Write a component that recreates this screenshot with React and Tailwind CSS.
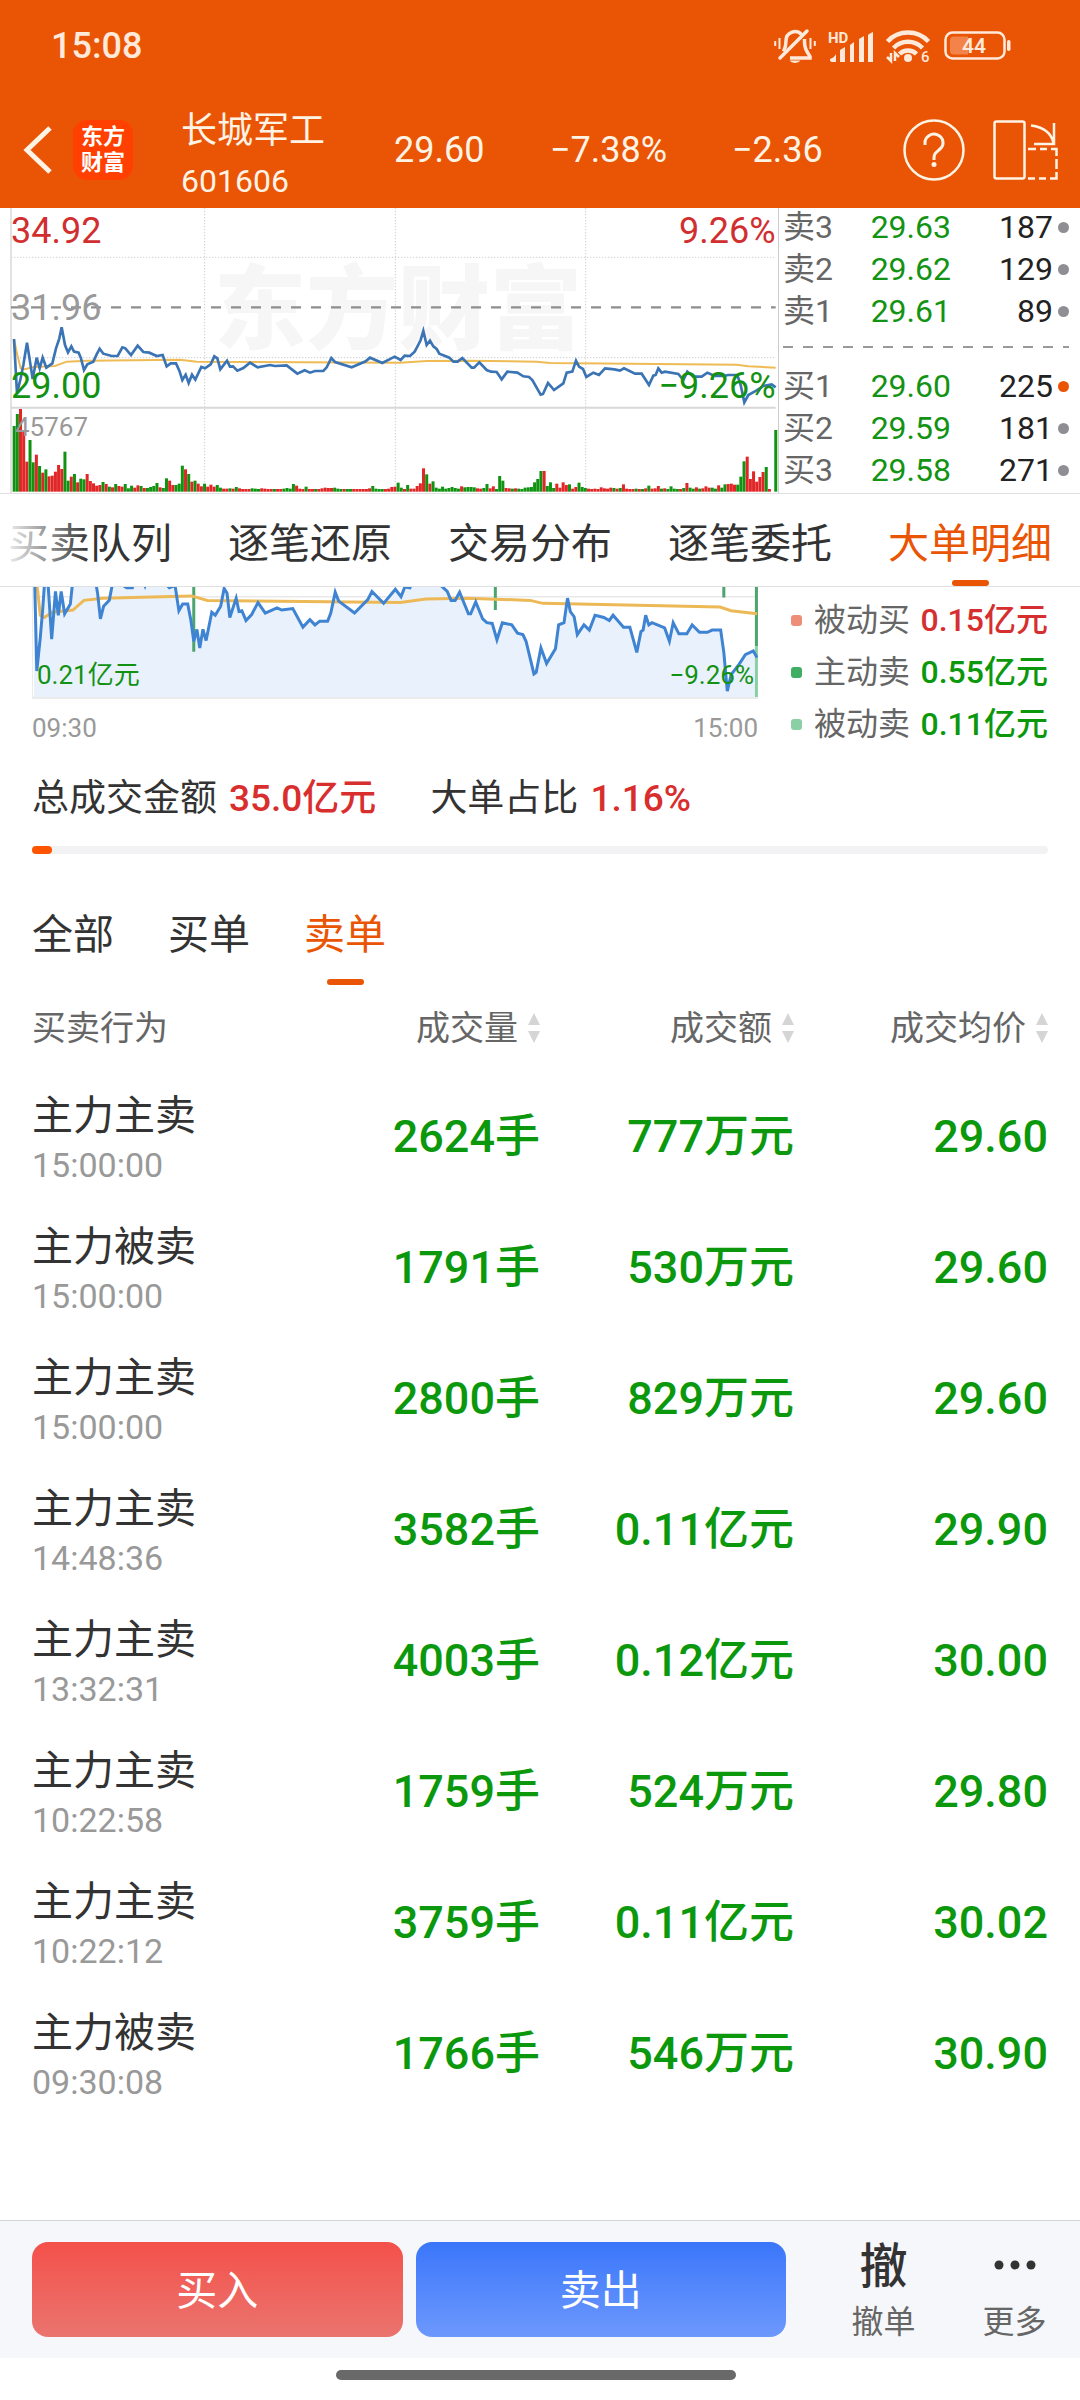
import { useState } from 'react';

const asks = [
  { label: '卖3', price: '29.63', qty: 187 },
  { label: '卖2', price: '29.62', qty: 129 },
  { label: '卖1', price: '29.61', qty: 89 },
];

const bids = [
  { label: '买1', price: '29.60', qty: 225, active: true },
  { label: '买2', price: '29.59', qty: 181 },
  { label: '买3', price: '29.58', qty: 271 },
];

const navTabs = ['买卖队列', '逐笔还原', '交易分布', '逐笔委托', '大单明细'];

const legend = [
  { label: '被动买', value: '0.15亿元', dot: 'bg-[#ed8f78]', text: 'text-[#d62f2f]' },
  { label: '主动卖', value: '0.55亿元', dot: 'bg-[#3fae64]', text: 'text-[#0c980c]' },
  { label: '被动卖', value: '0.11亿元', dot: 'bg-[#8bd0a4]', text: 'text-[#0c980c]' },
];

const orders = [
  { type: '主力主卖', time: '15:00:00', volume: '2624手', amount: '777万元', price: '29.60' },
  { type: '主力被卖', time: '15:00:00', volume: '1791手', amount: '530万元', price: '29.60' },
  { type: '主力主卖', time: '15:00:00', volume: '2800手', amount: '829万元', price: '29.60' },
  { type: '主力主卖', time: '14:48:36', volume: '3582手', amount: '0.11亿元', price: '29.90' },
  { type: '主力主卖', time: '13:32:31', volume: '4003手', amount: '0.12亿元', price: '30.00' },
  { type: '主力主卖', time: '10:22:58', volume: '1759手', amount: '524万元', price: '29.80' },
  { type: '主力主卖', time: '10:22:12', volume: '3759手', amount: '0.11亿元', price: '30.02' },
  { type: '主力被卖', time: '09:30:08', volume: '1766手', amount: '546万元', price: '30.90' },
];

// Intraday price line, shared by both charts
const pricePoints =
  '42,402 51,565 62,520 70,480 81,413 90,470 98,522 110,458 119,490 128,458 139,488 157,475 168,430 178,400 185,367 195,420 204,442 214,424 222,440 236,443 243,460 252,495 262,478 280,470 290,448 299,431 310,446 335,453 353,453 367,427 376,430 393,450 413,422 430,441 448,443 470,453 488,450 500,484 512,475 528,475 538,497 547,525 557,509 566,534 576,509 586,524 604,486 615,490 632,478 643,454 652,460 661,493 681,467 690,485 699,484 712,497 730,489 750,473 773,487 810,480 825,483 860,481 892,506 914,496 930,503 945,498 970,498 980,487 994,459 1005,471 1055,487 1097,469 1110,458 1147,474 1184,455 1202,465 1214,452 1230,453 1244,440 1254,421 1262,405 1270,378 1280,420 1290,407 1300,424 1310,432 1318,446 1348,458 1360,470 1373,470 1387,459 1415,488 1422,488 1438,472 1460,495 1473,500 1490,501 1505,523 1522,500 1552,503 1570,514 1587,516 1597,525 1622,569 1629,567 1644,534 1662,555 1690,535 1700,503 1717,500 1728,467 1737,485 1749,492 1759,516 1780,503 1797,510 1815,490 1843,493 1860,497 1872,490 1905,506 1925,506 1947,540 1960,512 1967,510 1975,490 1985,503 1995,500 2035,507 2050,525 2062,500 2080,515 2105,515 2122,503 2145,513 2170,513 2185,510 2212,510 2222,540 2233,592 2245,570 2270,556 2290,543 2315,538 2327,547';

const averagePoints =
  '42,402 52,450 62,490 75,493 100,486 165,483 200,470 260,467 540,464 590,470 1200,473 1280,468 1410,467 1610,470 1650,474 2210,479 2245,484 2327,488';

// Volume per minute; negative means the price fell
const volumes = [
  -197, -233, 248, 185, 90, -155, -88, 111, -77, 57, -67, 46, 48, 60, 80, 68, -120, -33, 45, -53,
  28, -39, -37, 53, 32, 25, 18, 20, -29, 23, -15, 13, -23, 17, 15, -23, -10, -18, 12, 19,
  -17, 11, -11, -14, -17, -26, 13, -11, -40, 33, 20, -20, -24, -78, 67, -53, 30, -33, 24, 16,
  -24, 15, 21, 15, -20, -12, 9, 9, -10, 9, -14, 10, 8, 8, 8, -10, -9, -8, 10, 9,
  8, 8, -8, 8, 8, -9, -11, -9, -23, 18, 9, 8, -15, 8, 8, -8, 8, 10, 12, 11,
  11, -12, -9, -8, 8, -8, -8, 8, 8, 8, 8, 8, 10, -17, -9, -8, -8, 8, 9, 14,
  15, -27, -12, 8, -20, 9, 9, 17, 25, 70, -52, 24, -31, -12, -9, -15, -9, -11, -14, -11,
  -9, 16, -13, -14, -14, -13, 10, 9, -11, -23, 10, 16, -8, -47, -33, 11, 10, -9, 10, -9,
  -8, -12, -13, -14, -28, -38, -62, 62, -17, -28, -11, 24, 12, 28, 20, -22, 9, 14, -27, -14,
  -11, 9, 8, 9, 8, 13, 10, 9, 12, -11, 9, -11, 22, 9, 8, 8, -9, 8, -8, 10,
  -18, 9, 10, 17, -9, 10, -8, -16, -9, -8, 8, -11, 26, -12, -9, 13, -9, 10, 16, 12,
  -12, -9, 19, -12, -22, 23, 24, 21, -21, -45, -91, 105, 38, 61, 30, 44, 59, -74, 8, 0,
  -185,
];

const StatusIcons = () => (
  <div className="flex items-center gap-3 text-[#ffe9da]">
    <svg width="42" height="36" viewBox="0 0 42 36" fill="none" stroke="currentColor" strokeWidth="3.5">
      <path d="M9.5 23.5C11.5 20 12 17 12 13a9 9 0 0 1 15.5-6.5" />
      <path d="M30.5 11v3c0 6 2 9 5.5 14.5V30H16" />
      <path d="M33 3 6 30" strokeLinecap="round" />
      <path d="M15.500 32.500h11a6 4 0 0 1-11 0Z" fill="currentColor" stroke="none" />
      <path d="M1.200 13v5M5.500 10v11M36.500 10v11M40.800 13v5" strokeWidth="2" />
    </svg>
    <svg width="46" height="34" viewBox="0 0 46 34" fill="currentColor" className="overflow-visible">
      <text x="0" y="14" fontSize="15" fontWeight="700">HD</text>
      <path d="M2 30q4-1 6-5v8H4q-2 0-2-2zM12 21l5-3v15h-5zM22 16l4-3v20h-4zM31 10l5-3v26h-5zM40 6q2-2 5-3v30h-5z" />
    </svg>
    <svg width="46" height="36" viewBox="0 0 46 36" fill="none" stroke="currentColor" strokeWidth="4.5" className="overflow-visible">
      <path d="M1.500 13.500a28 28 0 0 1 41 0" />
      <path d="M7.500 20a20 20 0 0 1 29 0" />
      <path d="M13.500 26a12 12 0 0 1 17 0" />
      <circle cx="22" cy="30" r="4" fill="currentColor" stroke="none" />
      <path d="M1 29l4 4v-8M9 33v-8l4 4" strokeWidth="2.500" />
      <text x="35" y="34" fontSize="15" fontWeight="500" fill="currentColor" stroke="none">6</text>
    </svg>
    <svg width="67" height="30" viewBox="0 0 67 30">
      <rect x="1.500" y="1.500" width="59" height="26" rx="7" fill="none" stroke="currentColor" strokeWidth="2.500" />
      <path d="M10 5.500h14v18H10q-4 0-4-4v-10q0-4 4-4z" fill="#f4834a" />
      <rect x="63" y="9" width="3.500" height="11" rx="1.700" fill="currentColor" />
      <text x="30" y="22" fontSize="21" fontWeight="600" textAnchor="middle" fill="currentColor">44</text>
    </svg>
  </div>
);

const Header = () => (
  <header className="bg-[#e95504] text-[#fff3e6]">
    <div className="flex h-24 items-center justify-between pb-1 pl-[51px] pr-[69px]">
      <span className="text-[36px] font-medium text-[#ffe9da]">15:08</span>
      <StatusIcons />
    </div>
    <div className="flex h-28 items-center pb-1 pl-[23px] pr-[21px]">
      <button type="button" aria-label="返回">
        <svg width="30" height="50" viewBox="0 0 30 50" fill="none" stroke="currentColor" strokeWidth="5">
          <path d="M27 3 4 25l23 22" />
        </svg>
      </button>
      <div className="ml-5 flex h-15 w-15 flex-col items-center justify-center rounded-[14px] bg-[#ff4000] text-[22px] font-bold leading-[26px] text-white">
        <span>东方</span>
        <span>财富</span>
      </div>
      <div className="ml-12 w-[213px] pt-3 leading-[50px]">
        <h1 className="text-[36px]">长城军工</h1>
        <p className="text-[32px]">601606</p>
      </div>
      <span className="w-[156px] text-[36px]">29.60</span>
      <span className="w-[182px] text-[36px]">−7.38%</span>
      <span className="text-[36px]">−2.36</span>
      <div className="ml-auto flex gap-7">
        <button type="button" aria-label="帮助">
          <svg width="62" height="62" viewBox="0 0 62 62" fill="none" stroke="currentColor">
            <circle cx="31" cy="31" r="29.500" strokeWidth="2.500" />
            <path d="M22 26v-2a9 8.500 0 1 1 15 6c-4 3.500-6 4.500-6 9v2" strokeWidth="3" />
            <circle cx="31" cy="45.500" r="2.500" fill="currentColor" stroke="none" />
          </svg>
        </button>
        <button type="button" aria-label="横屏">
          <svg width="66" height="60" viewBox="0 0 66 60" fill="none" stroke="currentColor" strokeWidth="2.500">
            <rect x="1.500" y="1.500" width="30" height="57" rx="2" />
            <path d="M38 5.500C50 7 58 12 60.500 23M61 3v21H41" />
            <path d="M35 29h8m4 0h7m4 0h5.500v7m0 3v10m0 3v6.500H57m-4 0h-7m-4 0h-7" />
          </svg>
        </button>
      </div>
    </div>
  </header>
);

const IntradayChart = () => (
  <svg viewBox="0 9 2334 855" className="block h-auto w-full" role="img" aria-label="分时图">
    <text x="642" y="410" fontSize="276" fontWeight="900" fill="#f6f6f6">东方财富</text>
    <g stroke="#cfcfcf" strokeWidth="3" strokeDasharray="4 5" fill="none">
      <path d="M33 157H2327M33 458H2327M614 9V860M1186 9V860M1757 9V860" />
    </g>
    <path d="M33 9V864" stroke="#dddddd" strokeWidth="5" />
    <path d="M33 608H2327" stroke="#d8d8d8" strokeWidth="6" />
    <path d="M33 307H2327" stroke="#8e8e8e" strokeWidth="7" strokeDasharray="30 30" />
    {volumes.map((v, i) => (
      <rect
        key={i}
        x={38 + i * 9.52}
        y={860 - Math.abs(v)}
        width="9"
        height={Math.abs(v)}
        fill={v > 0 ? '#e02626' : '#109310'}
      />
    ))}
    <polyline points={averagePoints} fill="none" stroke="#efbb55" strokeWidth="6" />
    <polyline points={pricePoints} fill="none" stroke="#3a74b4" strokeWidth="8" />
    <g fontSize="108">
      <text x="33" y="115" fill="#d12f2f">34.92</text>
      <text x="33" y="346" fill="#999999">31.96</text>
      <text x="33" y="579" fill="#139113">29.00</text>
      <text x="2327" y="115" fill="#d12f2f" textAnchor="end">9.26%</text>
      <text x="2327" y="579" fill="#139113" textAnchor="end">−9.26%</text>
      <text x="45" y="693" fill="#999999" fontSize="78">45767</text>
    </g>
  </svg>
);

const BookRow = ({ label, price, qty, active }) => (
  <li className="flex h-[38px] items-center">
    <span className="w-[60px] text-[#666]">{label}</span>
    <span className="w-[108px] text-right text-[#139313]">{price}</span>
    <span className="flex-1 text-right text-[#222]">{qty}</span>
    <span className={`ml-[5px] h-[11px] w-[11px] rounded-full ${active ? 'bg-[#e95504]' : 'bg-[#8f8e94]'}`} />
  </li>
);

const OrderBook = () => (
  <div className="border-l border-[#ccc] pl-1 pr-[11px] text-[32px] leading-[38px]">
    <ul className="flex flex-col gap-1">
      {asks.map((row) => <BookRow key={row.label} {...row} />)}
    </ul>
    <svg className="my-[15px] block h-[7px] w-full" aria-hidden="true">
      <path d="M0 2H400" stroke="#999" strokeWidth="2" strokeDasharray="10 10" />
    </svg>
    <ul className="flex flex-col gap-1">
      {bids.map((row) => <BookRow key={row.label} {...row} />)}
    </ul>
  </div>
);

const BigOrderChart = () => (
  <div>
    <div className="relative border-b-2 border-l border-[#ebebeb] text-[26px] leading-8 text-[#139113]">
      {/* same series as the intraday chart, only its lower band is visible */}
      <svg viewBox="39 452 2291 148" preserveAspectRatio="none" className="block h-[110px] w-full" role="img" aria-label="大单走势">
        <path d="M39 465H2330" stroke="#e9e9ec" strokeWidth="2" />
        <polygon points={`42,600 ${pricePoints} 2327,600`} fill="#e9f2fc" />
        <g fill="none" strokeWidth="3">
          <path d="M547 452V539M1500 452V483M2222 452V466M2325 452V532" stroke="#4ba56c" vectorEffect="non-scaling-stroke" />
          <path d="M2325 532V600" stroke="#8bd0a4" vectorEffect="non-scaling-stroke" />
          <polyline points={averagePoints} stroke="#ecb956" vectorEffect="non-scaling-stroke" />
          <polyline points={pricePoints} stroke="#3f83d3" vectorEffect="non-scaling-stroke" />
        </g>
      </svg>
      <span className="absolute bottom-1.5 left-1">0.21亿元</span>
      <span className="absolute bottom-1.5 right-1">−9.26%</span>
    </div>
    <div className="mt-[13px] flex justify-between text-[26px] leading-8 text-[#999]">
      <span>09:30</span>
      <span>15:00</span>
    </div>
  </div>
);

const SortIcon = () => (
  <svg width="12" height="30" viewBox="0 0 12 30" fill="#d5d5d5">
    <path d="M6 0l6 12H0zM6 30l6-12H0z" />
  </svg>
);

const SortHeader = ({ label }) => (
  <th className="p-0 font-normal">
    <button type="button" className="ml-auto flex items-center gap-2.5">
      {label}
      <SortIcon />
    </button>
  </th>
);

const App = () => {
  const [tab, setTab] = useState('大单明细');
  const [side, setSide] = useState('卖单');

  return (
    <div className="flex min-h-screen flex-col bg-white font-[Roboto,'Noto_Sans_CJK_SC',sans-serif] text-[#333]">
      <Header />

      <section className="grid grid-cols-[778fr_302fr] border-b border-[#e0e0e0]">
        <IntradayChart />
        <OrderBook />
      </section>

      <nav className="relative flex h-[93px] items-stretch gap-[56px] overflow-hidden border-b border-[#e0e0e0] pl-2">
        {navTabs.map((name) => (
          <button
            key={name}
            type="button"
            onClick={() => setTab(name)}
            className={`flex shrink-0 flex-col items-center justify-end text-[41px] leading-[56px] ${tab === name ? 'text-[#e95504]' : 'text-[#333]'}`}
          >
            {name}
            <span className={`mt-2 h-[6px] w-[37px] rounded-full ${tab === name ? 'bg-[#e95504]' : 'bg-transparent'}`} />
          </button>
        ))}
        <div className="pointer-events-none absolute inset-y-0 left-0 w-[90px] bg-gradient-to-r from-white to-transparent" />
      </nav>

      <main className="flex-1 px-8">
        <section className="grid grid-cols-[726fr_257fr] gap-[33px]">
          <BigOrderChart />
          <ul className="pt-[7px]">
            {legend.map((item) => (
              <li key={item.label} className="flex h-[52px] items-center text-[32px]">
                <span className={`h-[11px] w-[11px] rounded-[3px] ${item.dot}`} />
                <span className="ml-3 text-[#666]">{item.label}</span>
                <span className={`ml-auto font-medium ${item.text}`}>{item.value}</span>
              </li>
            ))}
          </ul>
        </section>

        <div className="mt-[25px] flex gap-[54px] text-[37px] leading-[48px]">
          <p>总成交金额<span className="ml-3 font-medium text-[#d92e2e]">35.0亿元</span></p>
          <p>大单占比<span className="ml-3 font-medium text-[#d92e2e]">1.16%</span></p>
        </div>
        <div className="mt-[23px] h-2 rounded-full bg-[#f2f2f5]">
          <div className="h-2 w-5 rounded-full bg-[#ff5400]" />
        </div>

        <div className="mt-[53px] flex gap-[54px]">
          {['全部', '买单', '卖单'].map((name) => (
            <button
              key={name}
              type="button"
              onClick={() => setSide(name)}
              className={`flex flex-col items-center text-[41px] leading-[56px] ${side === name ? 'text-[#e95504]' : 'text-[#333]'}`}
            >
              {name}
              <span className={`mt-4 h-[6px] w-[37px] rounded-full ${side === name ? 'bg-[#e95504]' : 'bg-transparent'}`} />
            </button>
          ))}
        </div>

        <table className="w-full table-fixed">
          <thead>
            <tr className="h-[86px] text-[34px] text-[#666]">
              <th className="p-0 text-left font-normal">买卖行为</th>
              <SortHeader label="成交量" />
              <SortHeader label="成交额" />
              <SortHeader label="成交均价" />
            </tr>
          </thead>
          <tbody>
            {orders.map((order, index) => (
              <tr key={index} className="h-[131px] text-right text-[45px] font-medium text-[#0c980c]">
                <td className="px-0 pb-0 pt-2 text-left font-normal leading-[49px]">
                  <p className="text-[41px] text-[#333]">{order.type}</p>
                  <p className="text-[34px] text-[#999]">{order.time}</p>
                </td>
                <td className="p-0">{order.volume}</td>
                <td className="p-0">{order.amount}</td>
                <td className="p-0">{order.price}</td>
              </tr>
            ))}
          </tbody>
        </table>
      </main>

      <footer>
        <div className="flex h-[138px] items-center border-t border-[#d5d6d8] bg-[#f6f7fa] pl-8">
          <div className="flex flex-1 gap-[13px] text-[41px] text-white">
            <button type="button" className="h-[95px] flex-1 rounded-2xl bg-gradient-to-b from-[#f4504a] to-[#ea736e] pt-1">买入</button>
            <button type="button" className="h-[95px] flex-1 rounded-2xl bg-gradient-to-b from-[#3a76fa] to-[#6d98fd] pt-1">卖出</button>
          </div>
          <button type="button" className="ml-8 flex w-[131px] flex-col items-center pt-2">
            <span className="text-[48px] font-medium leading-[56px]">撤</span>
            <span className="text-[32px] leading-[54px] text-[#666]">撤单</span>
          </button>
          <button type="button" className="flex w-[131px] flex-col items-center pt-2">
            <svg width="42" height="56" viewBox="0 0 42 56" fill="currentColor">
              <circle cx="5" cy="26" r="4.500" />
              <circle cx="21" cy="26" r="4.500" />
              <circle cx="37" cy="26" r="4.500" />
            </svg>
            <span className="text-[32px] leading-[54px] text-[#666]">更多</span>
          </button>
        </div>
        <div className="flex h-[42px] justify-center pr-2 pt-3">
          <div className="h-[10px] w-[400px] rounded-full bg-[#696969]" />
        </div>
      </footer>
    </div>
  );
};

export default App;
